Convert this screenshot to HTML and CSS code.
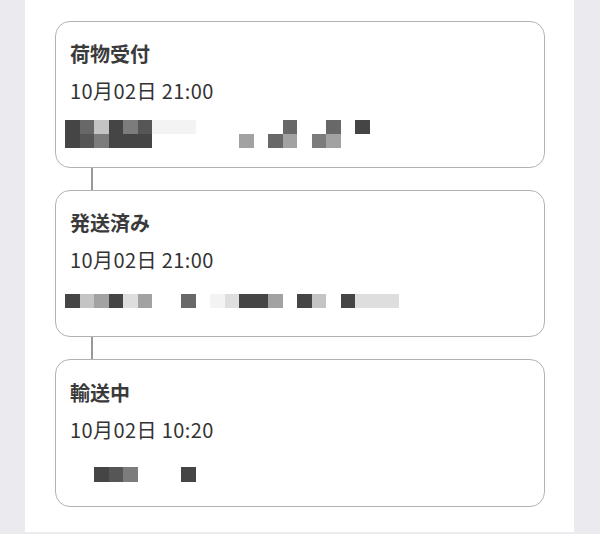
FILE: index.html
```html
<!DOCTYPE html>
<html lang="ja">
<head>
  <meta charset="UTF-8" />
  <meta name="viewport" content="width=device-width, initial-scale=1" />
  <title>配送状況</title>
  <link rel="stylesheet" href="styles.css">
</head>
<body>
  <div class="panel">

    <div class="card">
      <div class="card-title">荷物受付</div>
      <div class="card-date">10月02日 21:00</div>
      <div class="mosaic mosaic-first">
        <span class="s7"></span><span class="s5"></span><span class="s2"></span><span class="s7"></span><span class="s4"></span><span class="s6"></span><span class="s0"></span><span class="s0"></span><span class="s0"></span><span></span><span></span><span></span><span></span><span></span><span></span><span class="s5"></span><span></span><span></span><span class="s5"></span><span></span><span class="s7"></span><span></span><span></span>
        <span class="s7"></span><span class="s6"></span><span class="s4"></span><span class="s7"></span><span class="s7"></span><span class="s7"></span><span></span><span></span><span></span><span></span><span></span><span></span><span class="s3"></span><span></span><span class="s5"></span><span class="s3"></span><span></span><span class="s4"></span><span class="s3"></span><span></span><span></span><span></span><span></span>
      </div>
    </div>

    <div class="connector"></div>

    <div class="card">
      <div class="card-title">発送済み</div>
      <div class="card-date">10月02日 21:00</div>
      <div class="mosaic mosaic-second">
        <span class="s7"></span><span class="s2"></span><span class="s3"></span><span class="s7"></span><span class="s1"></span><span class="s3"></span><span></span><span></span><span class="s5"></span><span></span><span class="s0"></span><span class="s1"></span><span class="s7"></span><span class="s7"></span><span class="s3"></span><span></span><span class="s7"></span><span class="s2"></span><span></span><span class="s7"></span><span class="s1"></span><span class="s1"></span><span class="s1"></span>
      </div>
    </div>

    <div class="connector"></div>

    <div class="card card-last">
      <div class="card-title">輸送中</div>
      <div class="card-date">10月02日 10:20</div>
      <div class="mosaic mosaic-third">
        <span></span><span></span><span class="s7"></span><span class="s6"></span><span class="s4"></span><span></span><span></span><span></span><span class="s7"></span>
      </div>
    </div>

  </div>
</body>
</html>
```

FILE: styles.css
```css
body {
  margin: 0;
  background: #ebebef;
  color: #333;
  font-family: "Noto Sans CJK JP", "Noto Sans", sans-serif;
}

.panel {
  margin: 0 26px 0 25px;
  height: 532px;
  padding: 21px 29px 0 30px;
  box-sizing: border-box;
  background: #fff;
}

.card {
  height: 147px;
  box-sizing: border-box;
  border: 1px solid #b2b2b2;
  border-radius: 15px;
  padding: 18px 14px 0;
}

.card-last {
  height: 148px;
  padding-top: 19px;
}

.card-title {
  font-size: 20px;
  line-height: 28px;
  font-weight: 600;
  color: #3a3a3a;
}

.card-date {
  margin-top: 9px;
  font-size: 20px;
  line-height: 28px;
  letter-spacing: 0.4px;
  color: #333;
}

.connector {
  width: 2px;
  height: 22px;
  margin-left: 36px;
  background: #9a9a9a;
}

.mosaic {
  display: grid;
  grid-template-columns: repeat(23, 14.5px);
  grid-auto-rows: 14px;
  margin-left: -5px;
}

.mosaic-first { margin-top: 15px; }
.mosaic-second { margin-top: 20px; }
.mosaic-third { margin-top: 23px; grid-auto-rows: 15px; }

.s0 { background: #f3f3f3; }
.s1 { background: #dedede; }
.s2 { background: #c4c4c4; }
.s3 { background: #a2a2a2; }
.s4 { background: #7c7c7c; }
.s5 { background: #686868; }
.s6 { background: #565656; }
.s7 { background: #454545; }
```
